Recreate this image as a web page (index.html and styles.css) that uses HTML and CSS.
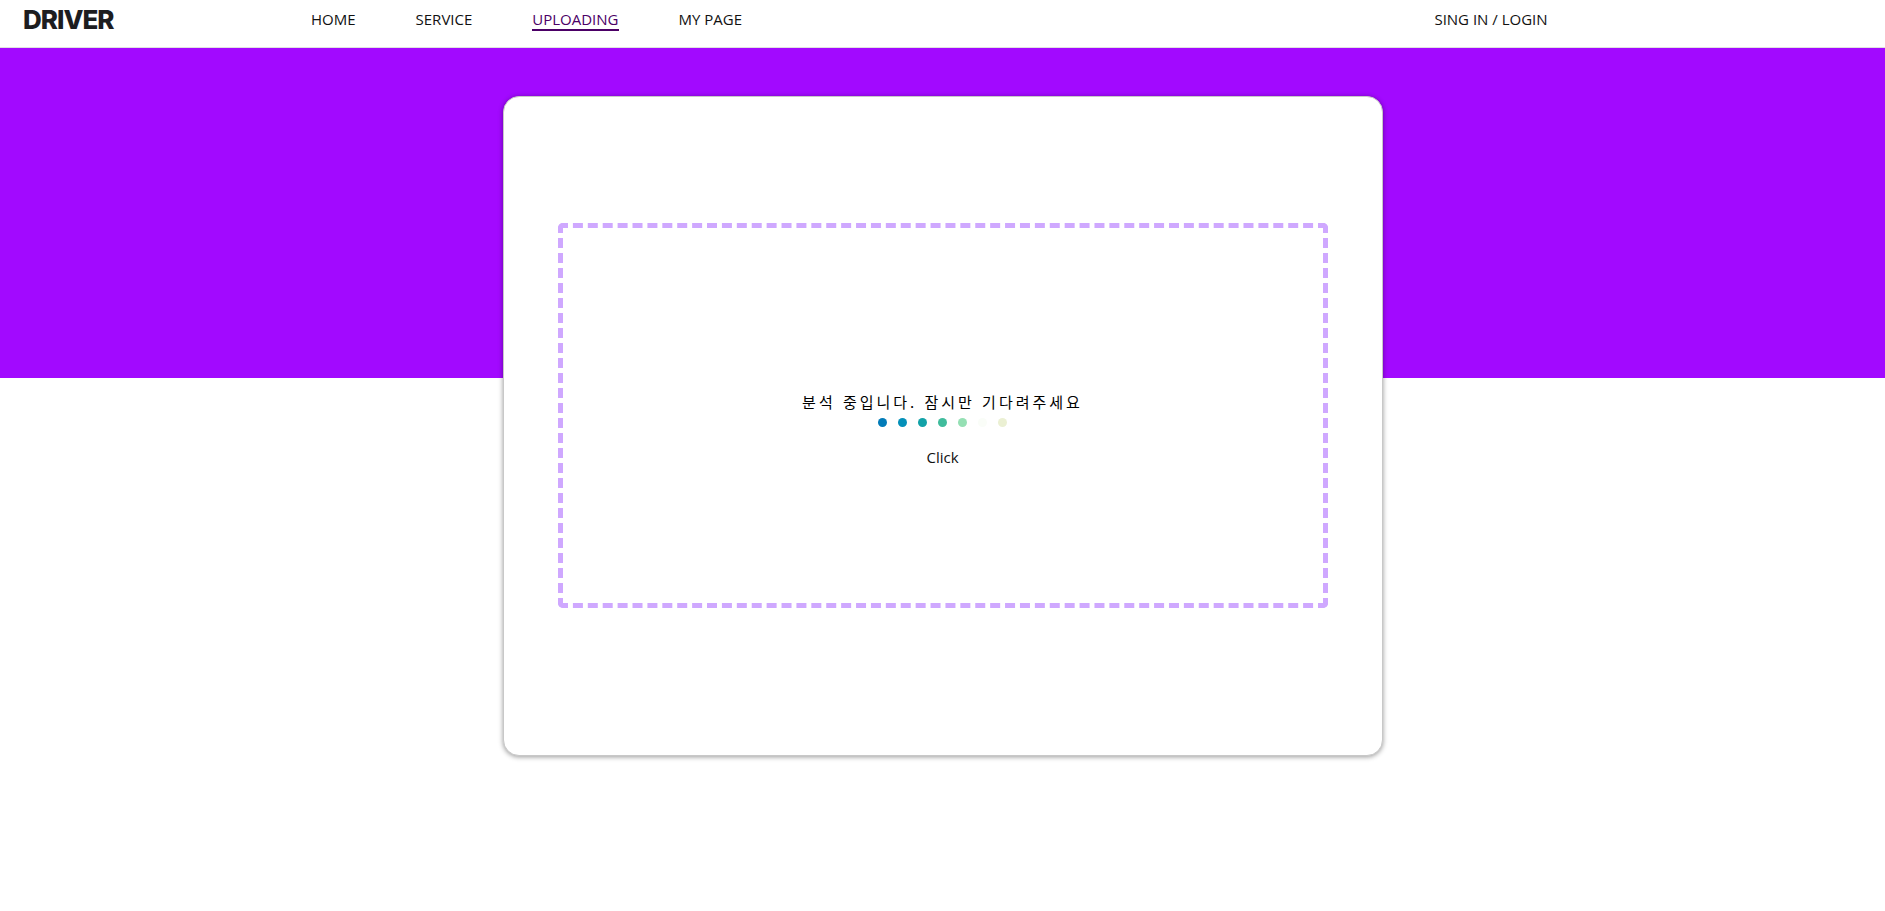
FILE: index.html
```html
<!DOCTYPE html>
<html lang="ko">
<head>
<meta charset="utf-8">
<meta name="viewport" content="width=device-width, initial-scale=1">
<title>DRIVER</title>
<link rel="stylesheet" href="styles.css">
</head>
<body>
<header class="header">
  <a class="logo" href="#">DRIVER</a>
  <nav class="nav">
    <a class="nav-link" href="#">HOME</a>
    <a class="nav-link" href="#">SERVICE</a>
    <a class="nav-link active" href="#" aria-current="page">UPLOADING</a>
    <a class="nav-link" href="#">MY PAGE</a>
  </nav>
  <a class="nav-link login" href="#">SING IN / LOGIN</a>
</header>
<main class="main">
  <section class="card">
    <div class="dropzone">
      <p class="message">분석 중입니다. 잠시만 기다려주세요</p>
      <div class="dots">
        <span class="dot dot-1"></span>
        <span class="dot dot-2"></span>
        <span class="dot dot-3"></span>
        <span class="dot dot-4"></span>
        <span class="dot dot-5"></span>
        <span class="dot dot-6"></span>
        <span class="dot dot-7"></span>
      </div>
      <button class="click" type="button">Click</button>
    </div>
  </section>
</main>
</body>
</html>
```
FILE: styles.css
```css
* {
  box-sizing: border-box;
}

body {
  margin: 0;
  background: #fff;
  color: #111;
  font-family: "Open Sans", "Noto Sans CJK KR", sans-serif;
  font-size: 15px;
  font-weight: 500;
}

.header {
  display: flex;
  align-items: center;
  height: 48px;
  padding: 0 17.9% 8px 23px;
  border-bottom: 1px solid #e0e0e0;
}

.logo {
  width: 288px;
  color: #1d1d1f;
  font-family: Inter, sans-serif;
  font-size: 26px;
  font-weight: 800;
  letter-spacing: -1px;
  line-height: 32px;
  text-decoration: none;
}

.nav {
  display: flex;
  gap: 60px;
}

.nav-link {
  border-bottom: 2px solid transparent;
  color: #111;
  line-height: 20px;
  text-decoration: none;
}

.nav-link.active {
  border-color: #4b0066;
  color: #4b0066;
}

.login {
  margin-left: auto;
}

.main {
  padding: 48px 16px;
  background: linear-gradient(#a209ff, #a209ff) top / 100% 330px no-repeat;
}

.card {
  max-width: 880px;
  min-height: 660px;
  margin: 0 auto;
  padding: 126px 54px 0;
  border: 1px solid #c8c8c8;
  border-radius: 16px;
  background: #fff;
  box-shadow: 0 1px 5px rgba(0, 0, 0, 0.4);
}

.dropzone {
  display: flex;
  flex-direction: column;
  align-items: center;
  height: 385px;
  padding-top: 162px;
  border: 5px dashed #cfa8ff;
  border-radius: 5px;
}

.message {
  margin: 0;
  color: #000;
  font-family: "Noto Sans CJK KR", sans-serif;
  font-size: 15px;
  font-weight: 400;
  letter-spacing: 3px;
  line-height: 24px;
}

.dots {
  display: flex;
  gap: 11px;
  margin-top: 4px;
}

.dot {
  width: 9px;
  height: 9px;
  border-radius: 50%;
}

.dot-1 { background: #027bb8; }
.dot-2 { background: #0490b9; }
.dot-3 { background: #12a2a8; }
.dot-4 { background: #40bc9c; }
.dot-5 { background: #95e0b4; }
.dot-6 { background: #fafdf8; }
.dot-7 { background: #ebf0d3; }

.click {
  margin-top: 20px;
  padding: 0;
  border: 0;
  background: none;
  color: #111;
  font: inherit;
  line-height: 20px;
  cursor: pointer;
}
```
